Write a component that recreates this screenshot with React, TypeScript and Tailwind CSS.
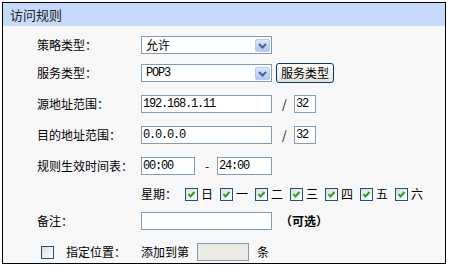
import type { ReactNode } from "react";

const FONT = "font-['Noto_Sans_CJK_SC','Liberation_Sans',sans-serif]";
const MONO = "font-['Liberation_Mono','Noto_Sans_CJK_SC',monospace]";

function Row({ label, top, children }: { label?: ReactNode; top: string; children: ReactNode }) {
  return (
    <div className={`flex h-[18px] items-center ${top}`}>
      <div className="w-[138px] shrink-0 whitespace-nowrap pl-[34px] text-[12px] leading-none">{label}</div>
      {children}
    </div>
  );
}

function Select({ value }: { value: string }) {
  return (
    <div className="relative flex h-[18px] w-[131px] items-center border border-[#7f9db9] bg-white pl-[4px] text-[12px] leading-none">
      <span className={value === "POP3" ? `${MONO} tracking-[-1.2px]` : ""}>{value}</span>
      <span className="absolute right-[1px] top-[2px] flex h-[13px] w-[15px] items-center justify-center rounded-[2px] border border-[#b7c9f0] bg-gradient-to-b from-[#d9e4fd] to-[#b3c7f6]">
        <svg width="9" height="6" viewBox="0 0 9 6">
          <path d="M1 1 L4.5 4.5 L8 1" fill="none" stroke="#4d6185" strokeWidth="2" />
        </svg>
      </span>
    </div>
  );
}

function Input({ value = "", w, disabled }: { value?: string; w: string; disabled?: boolean }) {
  return (
    <div
      className={`flex h-[18px] ${w} items-center border border-[#7f9db9] ${disabled ? "bg-[#ebebe4]" : "bg-white"} pl-[1px] ${MONO} text-[12px] leading-none tracking-[-1.2px]`}
    >
      {value}
    </div>
  );
}

function Check({ checked = true }: { checked?: boolean }) {
  return (
    <span className="flex h-[13px] w-[13px] shrink-0 items-center justify-center border border-[#1c5180] bg-gradient-to-br from-[#dcdcd7] to-white">
      {checked ? (
        <svg width="9" height="9" viewBox="0 0 9 9">
          <path d="M1.5 4 L3.5 6.5 L7.5 2" fill="none" stroke="#21a121" strokeWidth="2" />
        </svg>
      ) : null}
    </span>
  );
}

const DAYS = ["日", "一", "二", "三", "四", "五", "六"];

export default function App() {
  return (
    <div className={`h-[267px] w-[449px] bg-white pl-[2px] pt-[2px] text-black ${FONT}`}>
      <div className="flex h-[262px] w-[444px] flex-col border border-black bg-[#f7f7f7]">
        <div className="flex h-[23px] items-center bg-[#c6dafc] pl-[7px] text-[13px] leading-none text-[#222]">
          访问规则
        </div>

        <Row label="策略类型：" top="mt-[10px]">
          <Select value="允许" />
        </Row>

        <Row label="服务类型：" top="mt-[10px]">
          <Select value="POP3" />
          <button className="ml-[4px] flex h-[20px] w-[58px] items-center justify-center rounded-[3px] border border-[#003c74] bg-gradient-to-b from-white to-[#e6e3d6] text-[12px] leading-none">
            服务类型
          </button>
        </Row>

        <Row label="源地址范围：" top="mt-[13px]">
          <Input value="192.168.1.11" w="w-[131px]" />
          <span className="ml-[10px] w-[12px] text-[12px]">/</span>
          <Input value="32" w="w-[22px]" />
        </Row>

        <Row label="目的地址范围：" top="mt-[13px]">
          <Input value="0.0.0.0" w="w-[131px]" />
          <span className="ml-[10px] w-[12px] text-[12px]">/</span>
          <Input value="32" w="w-[22px]" />
        </Row>

        <Row label="规则生效时间表：" top="mt-[13px]">
          <Input value="00:00" w="w-[54px]" />
          <span className="ml-[10px] w-[12px] text-[12px]">-</span>
          <Input value="24:00" w="w-[55px]" />
        </Row>

        <Row top="mt-[10px]">
          <span className="w-[44px] text-[12px] leading-none">星期：</span>
          {DAYS.map((d) => (
            <span key={d} className="flex w-[35px] items-center gap-[3px] text-[12px] leading-none">
              <Check />
              {d}
            </span>
          ))}
        </Row>

        <Row label="备注：" top="mt-[9px]">
          <Input w="w-[131px]" />
          <span className="ml-[8px] text-[12px] font-bold leading-none">（可选）</span>
        </Row>

        <div className="mt-[13px] flex h-[18px] items-center">
          <span className="ml-[38px]">
            <Check checked={false} />
          </span>
          <span className="ml-[12px] w-[75px] text-[12px] leading-none">指定位置：</span>
          <span className="w-[56px] text-[12px] leading-none">添加到第</span>
          <Input w="w-[52px]" disabled />
          <span className="ml-[8px] text-[12px] leading-none">条</span>
        </div>
      </div>
    </div>
  );
}
